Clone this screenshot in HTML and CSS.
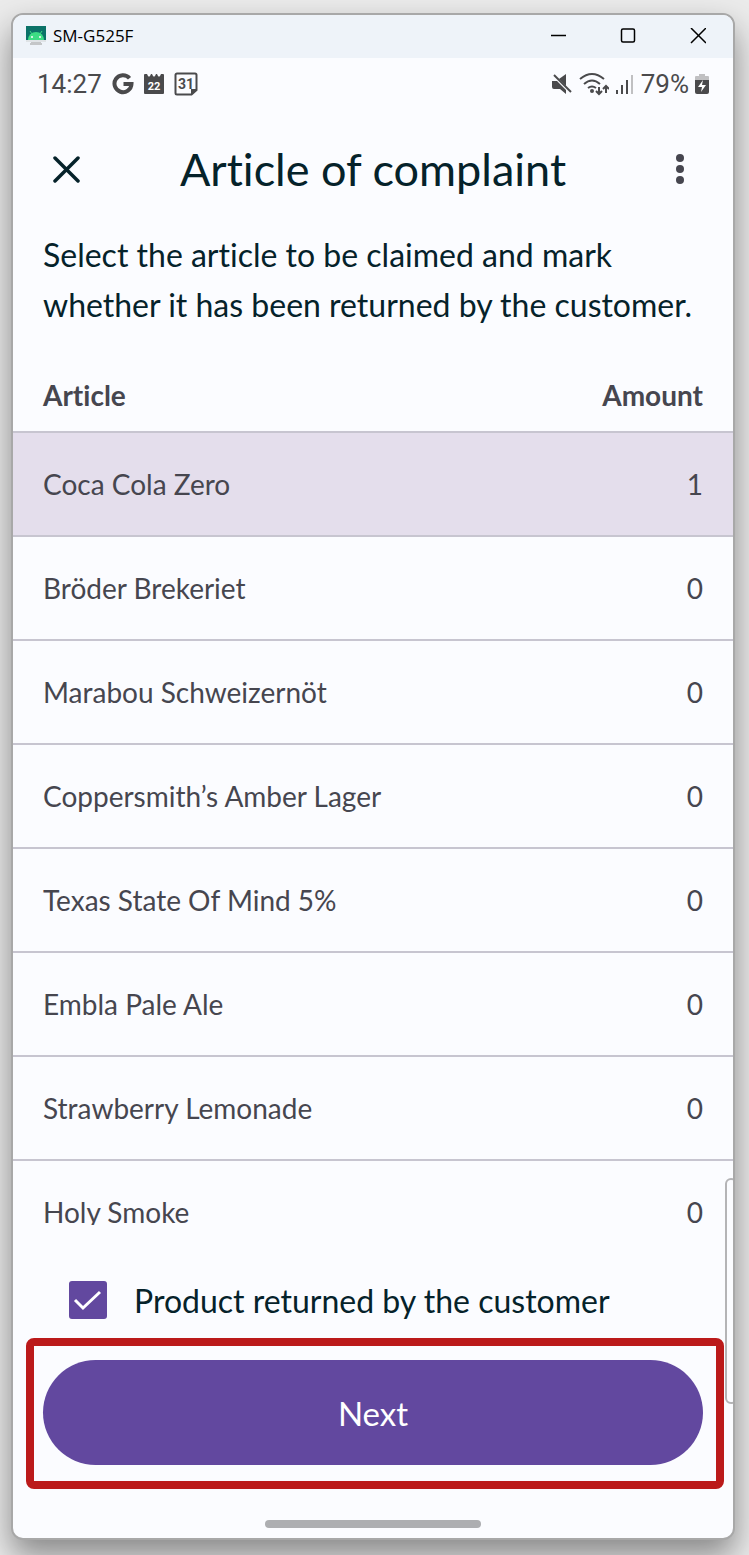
FILE: index.html
```html
<!DOCTYPE html>
<html lang="en">
<head>
    <meta charset="utf-8">
    <meta name="viewport" content="width=device-width, initial-scale=1">
    <title>Article of complaint</title>
    <link rel="stylesheet" href="styles.css">
</head>
<body>
    <div class="window">
        <div class="titlebar">
            <svg class="app-icon" width="20" height="20" viewBox="0 0 20 20">
                <rect width="20" height="14" fill="#0b7268"/>
                <path d="M2 14a8 8 0 0 1 16 0z" fill="#3ddc84"/>
                <path d="M6 8L4 5M14 8l2-3" stroke="#3ddc84" stroke-width="1"/>
                <circle cx="6" cy="11" r="1" fill="#fff"/>
                <circle cx="14" cy="11" r="1" fill="#fff"/>
                <path d="M0 14h20v2H0z" fill="#dfe3e6"/>
                <path d="M5 16h10v1h1v2H4v-2h1z" fill="#c4c6c8"/>
            </svg>
            <span class="window-title">SM-G525F</span>
            <div class="window-buttons">
                <button type="button" aria-label="Minimize">
                    <svg width="16" height="16" viewBox="0 0 16 16"><path d="M1 7.5h15"/></svg>
                </button>
                <button type="button" aria-label="Maximize">
                    <svg width="16" height="16" viewBox="0 0 16 16"><rect x="1.500" y="1" width="13" height="13" rx="1.500"/></svg>
                </button>
                <button type="button" aria-label="Close window">
                    <svg width="16" height="16" viewBox="0 0 16 16"><path d="M1 0l15 15M16 0L1 15"/></svg>
                </button>
            </div>
        </div>

        <div class="statusbar">
            <span class="clock">14:27</span>
            <svg width="22" height="22" viewBox="0 0 22 22">
                <path d="M17.500 5.200A8.500 8.500 0 1 0 19.500 11H11.500" fill="none" stroke="#4a4a4c" stroke-width="4"/>
            </svg>
            <svg width="20" height="22" viewBox="0 0 20 22">
                <path d="M0 2q0-1 1-1h2l1 2q1 1 2 0l1-2h1l1 2q1 1 2 0l1-2h1l1 2q1 1 2 0l1-2h2q1 0 1 1v18q0 1-1 1H1q-1 0-1-1z" fill="#4a4a4c"/>
                <text class="icon-text" x="10" y="17" fill="#fff" font-size="11">22</text>
            </svg>
            <svg width="24" height="24" viewBox="0 0 24 24">
                <path d="M3 1.500h18a1.500 1.500 0 0 1 1.500 1.500v15l-5 4.500H3A1.500 1.500 0 0 1 1.500 21V3A1.500 1.500 0 0 1 3 1.500z" fill="none" stroke="#4a4a4c" stroke-width="2"/>
                <path d="M23 17h-6v6z" fill="#4a4a4c"/>
                <text class="icon-text" x="12" y="17" fill="#4a4a4c" font-size="14">31</text>
            </svg>
            <div class="status-right">
                <svg width="22" height="22" viewBox="0 0 22 22">
                    <path d="M1 8h5l9 9v4l-6-5H3q-2 0-2-2z" fill="#4a4a4c"/>
                    <path d="M15 1v12L8 6z" fill="#4a4a4c"/>
                    <path d="M3 2l17 17" stroke="#4a4a4c" stroke-width="2"/>
                </svg>
                <svg width="30" height="24" viewBox="0 0 30 24">
                    <path d="M1 7q12-10 24 0M5 12q8-7 16 0M9 16q4-3 8 0" fill="none" stroke="#4a4a4c" stroke-width="2"/>
                    <circle cx="13" cy="19" r="2" fill="#4a4a4c"/>
                    <path d="M20 15v7M17 19l3 3 3-3M27 21v-7M24 17l3-3 3 3" fill="none" stroke="#4a4a4c" stroke-width="2"/>
                </svg>
                <svg width="20" height="22" viewBox="0 0 20 22">
                    <path d="M2 17v4M7 12v9M12 7v14" stroke="#4a4a4c" stroke-width="2"/>
                    <path d="M17 2v19" stroke="#c0c0c2" stroke-width="2"/>
                </svg>
                <span class="battery-level">79%</span>
                <svg width="14" height="22" viewBox="0 0 14 22">
                    <path d="M0 7V4q0-1 1-1h3V1h6v2h3q1 0 1 1v3z" fill="#c0c0c2"/>
                    <path d="M0 7h14v12q0 2-2 2H2q-2 0-2-2z" fill="#4a4a4c"/>
                    <path d="M8 7l-5 7h4l-1 5 5-7H7z" fill="#fff"/>
                </svg>
            </div>
        </div>

        <header class="appbar">
            <button type="button" class="icon-button" aria-label="Close">
                <svg width="28" height="28" viewBox="0 0 28 28"><path d="M3 3l23 23M26 3L3 26" stroke="#05222a" stroke-width="3.500" stroke-linecap="round"/></svg>
            </button>
            <h1>Article of complaint</h1>
            <button type="button" class="icon-button" aria-label="More options">
                <svg width="8" height="32" viewBox="0 0 8 32" fill="#46464f"><circle cx="4" cy="5" r="4"/><circle cx="4" cy="16" r="4"/><circle cx="4" cy="27" r="4"/></svg>
            </button>
        </header>

        <p class="description">Select the article to be claimed and mark whether it has been returned by the customer.</p>

        <div class="list">
            <table>
                <thead>
                    <tr><th>Article</th><th>Amount</th></tr>
                </thead>
                <tbody>
                    <tr class="selected"><td>Coca Cola Zero</td><td>1</td></tr>
                    <tr><td>Bröder Brekeriet</td><td>0</td></tr>
                    <tr><td>Marabou Schweizernöt</td><td>0</td></tr>
                    <tr><td>Coppersmith’s Amber Lager</td><td>0</td></tr>
                    <tr><td>Texas State Of Mind 5%</td><td>0</td></tr>
                    <tr><td>Embla Pale Ale</td><td>0</td></tr>
                    <tr><td>Strawberry Lemonade</td><td>0</td></tr>
                    <tr><td>Holy Smoke</td><td>0</td></tr>
                </tbody>
            </table>
        </div>

        <div class="returned">
            <input type="checkbox" id="returned" checked>
            <label for="returned">Product returned by the customer</label>
        </div>

        <div class="highlight">
            <button type="button" class="next">Next</button>
        </div>

        <div class="navbar"><div class="nav-handle"></div></div>
        <div class="edge-panel"></div>
    </div>
</body>
</html>
```

FILE: styles.css
```css
* {
    box-sizing: border-box;
}
body {
    margin: 0;
    height: 100vh;
    padding: 13px 14px 15px 11px;
    background: #ebebeb;
    color: #05222a;
    font-family: Lato, sans-serif;
    font-variant-ligatures: none;
    overflow: hidden;
}
button {
    padding: 0;
    border: 0;
    background: none;
    font: inherit;
}
svg {
    display: block;
    flex: none;
}
.window {
    position: relative;
    height: 100%;
    display: flex;
    flex-direction: column;
    background: #fbfcff;
    border: 2px solid #a8a8a8;
    border-radius: 12px;
    overflow: hidden;
    box-shadow: 0 16px 32px rgba(0, 0, 0, 0.42);
}

/* desktop window title bar */
.titlebar {
    height: 43px;
    flex: none;
    display: flex;
    align-items: center;
    padding: 0 0 2px 13px;
    gap: 7px;
    background: #eef3f9;
}
.window-title {
    font-family: "Open Sans", sans-serif;
    font-size: 17px;
    color: #000;
}
.window-buttons {
    display: flex;
    margin-left: auto;
}
.window-buttons button {
    width: 70px;
    height: 40px;
    display: flex;
    align-items: center;
    justify-content: center;
}
.window-buttons svg {
    fill: none;
    stroke: #000;
    stroke-width: 1.5;
}

/* phone status bar */
.statusbar {
    height: 50px;
    flex: none;
    display: flex;
    align-items: center;
    gap: 10px;
    padding: 2px 24px 0;
    font-family: Roboto, sans-serif;
    font-size: 26px;
    color: #4a4a4c;
}
.icon-text {
    font-family: Roboto, sans-serif;
    font-weight: bold;
    text-anchor: middle;
}
.status-right {
    display: flex;
    align-items: center;
    gap: 6px;
    margin-left: auto;
}

.appbar {
    height: 122px;
    flex: none;
    display: flex;
    align-items: center;
    justify-content: space-between;
    padding: 0 29px;
}
.icon-button {
    width: 48px;
    height: 48px;
    display: flex;
    align-items: center;
    justify-content: center;
}
h1 {
    margin: 0;
    font-size: 45px;
    font-weight: normal;
}
.description {
    margin: 0 0 31px;
    padding: 0 30px;
    font-size: 32px;
    line-height: 50px;
}

/* article list */
.list {
    flex: 1;
    min-height: 0;
    overflow-y: auto;
    scrollbar-width: none;
}
table {
    width: 100%;
    border-spacing: 0;
    font-size: 28px;
    color: #46464f;
}
th,
td {
    height: 104px;
    padding: 0 30px;
    text-align: left;
    border-bottom: 2px solid #c7c5d0;
}
th {
    height: 72px;
    padding-bottom: 2px;
}
th:last-child,
td:last-child {
    text-align: right;
}
.selected {
    background: #e4deec;
}

.returned {
    flex: none;
    height: 113px;
    display: flex;
    align-items: center;
    gap: 27px;
    padding: 37px 56px 0;
    font-size: 32px;
}
.returned input {
    appearance: none;
    width: 38px;
    height: 38px;
    margin: 0;
    border-radius: 3px;
    border: 3px solid #62489f;
}
.returned input:checked {
    background: #62489f url("data:image/svg+xml,%3Csvg xmlns='http://www.w3.org/2000/svg' viewBox='0 0 32 32'%3E%3Cpath d='M3 16l8 8L28 8' fill='none' stroke='white' stroke-width='3'/%3E%3C/svg%3E") center / 100%;
}
.highlight {
    flex: none;
    margin: 0 9px 0 13px;
    padding: 14px 13px 16px 9px;
    border: 8px solid #bb1a1a;
    border-radius: 8px;
}
.next {
    display: block;
    width: 100%;
    height: 105px;
    border-radius: 53px;
    background: #62489f;
    color: #fff;
    font-size: 33px;
}
.navbar {
    flex: none;
    padding: 31px 0 10px;
}
.nav-handle {
    width: 30%;
    height: 8px;
    margin: 0 auto;
    border-radius: 4px;
    background: #adaeb1;
}
.edge-panel {
    position: absolute;
    right: -4px;
    bottom: 134px;
    width: 12px;
    height: 226px;
    border: 2px solid #b4b4b6;
    border-radius: 8px;
}
```
